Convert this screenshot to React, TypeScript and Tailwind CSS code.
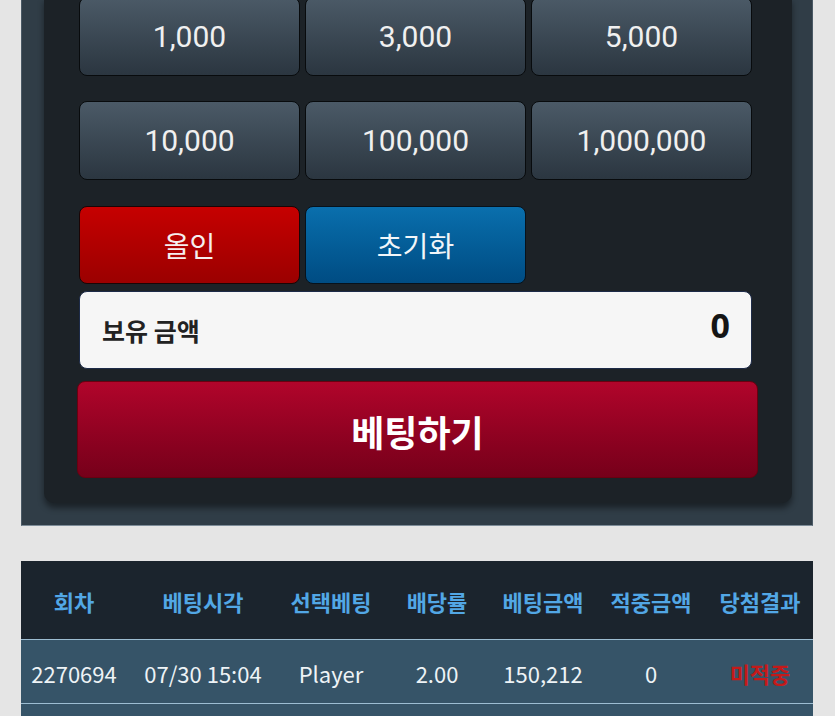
import React from "react";

const amounts = ["1,000", "3,000", "5,000", "10,000", "100,000", "1,000,000"];

const columns = [
  { label: "회차", w: "w-[106px]" },
  { label: "베팅시각", w: "w-[152px]" },
  { label: "선택베팅", w: "w-[104px]" },
  { label: "배당률", w: "w-[108px]" },
  { label: "베팅금액", w: "w-[104px]" },
  { label: "적중금액", w: "w-[112px]" },
  { label: "당첨결과", w: "flex-1" },
];

const rows = [["2270694", "07/30 15:04", "Player", "2.00", "150,212", "0", "미적중"]];

export default function App() {
  return (
    <div className="min-h-screen w-[835px] bg-[#e5e5e5] overflow-hidden font-['Noto_Sans_CJK_KR',sans-serif]">
      {/* 베팅 패널 */}
      <div className="ml-[21px] w-[792px] bg-[#303d47] border-x border-b border-x-[#4a5965] border-b-[#7d8c98] pl-[22px] pr-[20px] pb-[22px]">
        <div className="bg-[#1c2227] rounded-b-[10px] shadow-[0_5px_6px_rgba(0,0,0,0.45)] pl-[35px] pr-[40px] pb-[25px]">
          <div className="-mt-[3px] grid grid-cols-3 gap-x-[5px] gap-y-[25px]">
            {amounts.map((a) => (
              <button
                key={a}
                type="button"
                className="h-[79px] rounded-[8px] border border-[#080b0d] bg-gradient-to-b from-[#4b5a67] to-[#2b3640] text-[#f0f0f0] text-[30px] font-['Roboto',sans-serif] flex items-center justify-center"
              >
                {a}
              </button>
            ))}
          </div>

          <div className="mt-[26px] grid grid-cols-3 gap-x-[5px]">
            <button
              type="button"
              className="h-[78px] rounded-[8px] border border-[#1a0505] bg-gradient-to-b from-[#c60000] to-[#9b0000] text-[#f6eeee] text-[28px] flex items-center justify-center"
            >
              올인
            </button>
            <button
              type="button"
              className="h-[78px] rounded-[8px] border border-[#07121c] bg-gradient-to-b from-[#0a6fad] to-[#004c83] text-[#f2f6f9] text-[28px] flex items-center justify-center"
            >
              초기화
            </button>
          </div>

          <div className="mt-[7px] h-[78px] rounded-[8px] border border-[#1d2b48] bg-[#f6f6f6] flex items-center justify-between pl-[22px] pr-[21px]">
            <span className="text-[25px] font-bold text-[#222] pt-[2px]">보유 금액</span>
            <span className="text-[34px] font-bold text-[#151515] font-['Noto_Sans',sans-serif] pb-[10px]">0</span>
          </div>

          <button
            type="button"
            className="mt-[12px] -ml-[2px] w-[681px] h-[97px] rounded-[8px] border border-[#6a0010] bg-gradient-to-b from-[#b1052b] to-[#76001a] text-white text-[36px] font-bold flex items-center justify-center pt-[2px]"
          >
            베팅하기
          </button>
        </div>
      </div>

      {/* 베팅 내역 */}
      <div className="ml-[21px] mt-[35px] w-[792px]">
        <div className="h-[79px] bg-[#1b242d] flex items-center border-b border-[#9dbdd2] pt-[2px]">
          {columns.map((c) => (
            <div key={c.label} className={`${c.w} text-center text-[22px] font-bold text-[#52a7e5]`}>
              {c.label}
            </div>
          ))}
        </div>
        {rows.map((r, i) => (
          <div key={i} className="h-[64px] bg-[#365468] flex items-center border-b border-[#9dbdd2] pt-[4px]">
            {r.map((v, j) => (
              <div
                key={j}
                className={`${columns[j].w} text-center text-[22px] ${
                  j === 6 ? "text-[#c41a1a] font-bold" : "text-[#eef3f6]"
                }`}
              >
                {v}
              </div>
            ))}
          </div>
        ))}
        <div className="h-[64px] bg-[#365468]" />
      </div>
    </div>
  );
}
